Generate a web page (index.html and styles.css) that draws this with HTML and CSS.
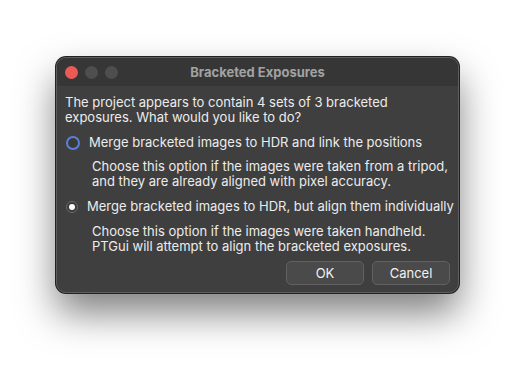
FILE: index.html
```html
<!DOCTYPE html>
<html lang="en">
<head>
    <meta charset="UTF-8">
    <title>Bracketed Exposures</title>
    <link rel="stylesheet" href="styles.css">
</head>
<body>
    <div class="desktop">
        <div class="window">
            <div class="titlebar">
                <div class="lights">
                    <span class="light red"></span>
                    <span class="light"></span>
                    <span class="light"></span>
                </div>
                <div class="title">Bracketed Exposures</div>
                <div></div>
            </div>
            <div class="content">
                <p class="intro">The project appears to contain 4 sets of 3 bracketed<br>exposures. What would you like to do?</p>
                <label class="option">
                    <span class="radio focus"></span>
                    Merge bracketed images to HDR and link the positions
                </label>
                <p class="desc">Choose this option if the images were taken from a tripod,<br>and they are already aligned with pixel accuracy.</p>
                <label class="option">
                    <span class="radio checked"></span>
                    Merge bracketed images to HDR, but align them individually
                </label>
                <p class="desc last">Choose this option if the images were taken handheld.<br>PTGui will attempt to align the bracketed exposures.</p>
                <div class="buttons">
                    <button>OK</button>
                    <button>Cancel</button>
                </div>
            </div>
        </div>
    </div>
</body>
</html>
```

FILE: styles.css
```css
body {
    margin: 0;
    background: #ffffff;
    font-family: Inter, "Liberation Sans", sans-serif;
}
.desktop {
    height: 369px;
    box-sizing: border-box;
    padding: 57px 0 0 56px;
}
.window {
    width: 401px;
    height: 234px;
    border: 1px solid #5e5e5e;
    border-radius: 10px;
    background: #3f3f3f;
    overflow: hidden;
    box-shadow: 0 0 0 1px #222222, 0 20px 38px rgba(0, 0, 0, 0.5);
}
.titlebar {
    height: 28px;
    background: #363636;
    display: grid;
    grid-template-columns: 1fr auto 1fr;
    align-items: center;
}
.lights {
    display: flex;
    gap: 7px;
    padding-left: 8px;
}
.light {
    width: 13px;
    height: 13px;
    border-radius: 50%;
    background: #4e4e4e;
}
.light.red {
    background: #ed5a55;
}
.title {
    color: #a2a2a2;
    font-size: 13px;
    font-weight: 700;
}
.content {
    padding: 9px 8px 0 8px;
    color: #ececec;
    font-size: 13px;
    line-height: 15px;
    white-space: nowrap;
}
.intro {
    margin: 0 0 10px 0;
}
.option {
    display: flex;
    align-items: center;
    gap: 9px;
    padding-left: 1px;
}
.radio {
    flex: none;
    width: 12px;
    height: 12px;
    border-radius: 50%;
    box-sizing: border-box;
    border: 1px solid #6b6b6b;
    background: #3a3a3a;
    display: flex;
    align-items: center;
    justify-content: center;
}
.radio.focus {
    border: 2px solid #5a80d8;
    width: 14px;
    height: 14px;
}
.radio.checked::after {
    content: "";
    width: 6px;
    height: 6px;
    border-radius: 50%;
    background: #ffffff;
}
.desc {
    margin: 9px 0 10px 27px;
}
.desc.last {
    margin-top: 10px;
    margin-bottom: 7px;
}
.buttons {
    display: flex;
    justify-content: flex-end;
    gap: 8px;
}
button {
    width: 78px;
    height: 24px;
    border: 1px solid #616161;
    border-radius: 5px;
    background: #4a4a4a;
    color: #f2f2f2;
    font-family: inherit;
    font-size: 13px;
}
```
